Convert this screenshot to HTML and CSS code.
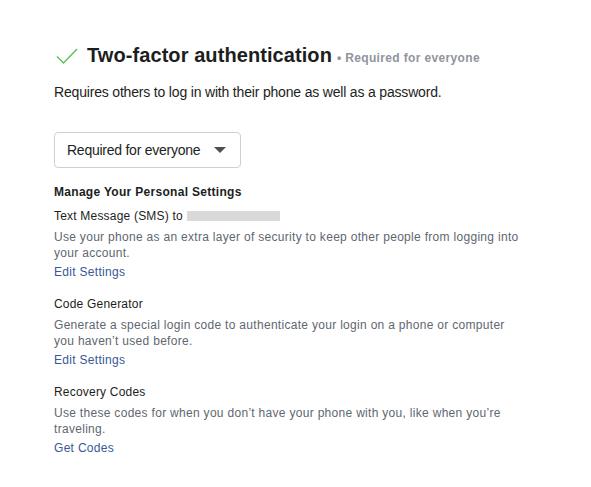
FILE: index.html
```html
<!DOCTYPE html>
<html>
<head>
<meta charset="utf-8">
<link rel="stylesheet" href="styles.css">
</head>
<body>
<main class="page">
  <header class="title-row">
    <svg class="check" width="22" height="16" viewBox="0 0 22 16"><path d="M1 8.5 L7.5 15 L21 1" fill="none" stroke="#5ac15a" stroke-width="1.4"/></svg>
    <h1 class="title">Two-factor authentication</h1>
    <span class="status">• Required for everyone</span>
  </header>
  <p class="intro">Requires others to log in with their phone as well as a password.</p>
  <div class="select">
    <span>Required for everyone</span>
    <span class="caret"></span>
  </div>
  <h2 class="section-head">Manage Your Personal Settings</h2>
  <section class="item">
    <div class="item-title">Text Message (SMS) to <span class="redacted"></span></div>
    <p class="item-desc">Use your phone as an extra layer of security to keep other people from logging into your account.</p>
    <a class="item-link" href="#">Edit Settings</a>
  </section>
  <section class="item">
    <div class="item-title">Code Generator</div>
    <p class="item-desc">Generate a special login code to authenticate your login on a phone or computer you haven’t used before.</p>
    <a class="item-link" href="#">Edit Settings</a>
  </section>
  <section class="item">
    <div class="item-title">Recovery Codes</div>
    <p class="item-desc">Use these codes for when you don’t have your phone with you, like when you’re traveling.</p>
    <a class="item-link" href="#">Get Codes</a>
  </section>
</main>
</body>
</html>
```

FILE: styles.css
```css
* { box-sizing: border-box; }
html, body { margin: 0; padding: 0; background: #fff; }
body {
  font-family: "Liberation Sans", Arial, sans-serif;
  color: #1c1e21;
}
.page {
  padding: 42px 40px 0 54px;
  width: 591px;
}
.title-row {
  display: flex;
  align-items: baseline;
  height: 26px;
}
.check {
  align-self: center;
  margin-left: 2px;
  margin-right: 9px;
  position: relative;
  top: 1px;
}
.title {
  margin: 0;
  font-size: 20px;
  font-weight: bold;
  color: #1c1e21;
  line-height: 26px;
  letter-spacing: 0.08px;
}
.status {
  margin-left: 5px;
  font-size: 12px;
  font-weight: bold;
  color: #90949c;
  letter-spacing: 0.35px;
}
.intro {
  margin: 15px 0 0;
  font-size: 14px;
  line-height: 18px;
  color: #1c1e21;
  letter-spacing: -0.18px;
}
.select {
  margin-top: 31px;
  width: 187px;
  height: 36px;
  border: 1px solid #ccd0d5;
  border-radius: 4px;
  display: flex;
  align-items: center;
  justify-content: space-between;
  padding: 0 14px 0 12px;
  font-size: 14px;
  color: #1c1e21;
  letter-spacing: -0.25px;
}
.caret {
  width: 0;
  height: 0;
  border-left: 6px solid transparent;
  border-right: 6px solid transparent;
  border-top: 6px solid #4b4f56;
}
.section-head {
  margin: 16px 0 0;
  font-size: 12px;
  line-height: 16px;
  font-weight: bold;
  color: #1c1e21;
  letter-spacing: 0.3px;
}
.item {
  margin-top: 8px;
  margin-bottom: 16px;
  font-size: 12px;
  line-height: 16px;
  letter-spacing: 0.3px;
}
.item + .item { margin-top: 0; }
.item-title {
  color: #1c1e21;
  display: flex;
  align-items: center;
  letter-spacing: 0.2px;
}
.redacted {
  display: inline-block;
  width: 93px;
  height: 10px;
  background: #d9d9d9;
  margin-left: 4px;
}
.item-desc {
  margin: 5px 0 0;
  color: #606770;
  width: 472px;
}
.item-link {
  display: block;
  margin-top: 3px;
  color: #385898;
  text-decoration: none;
}
```
